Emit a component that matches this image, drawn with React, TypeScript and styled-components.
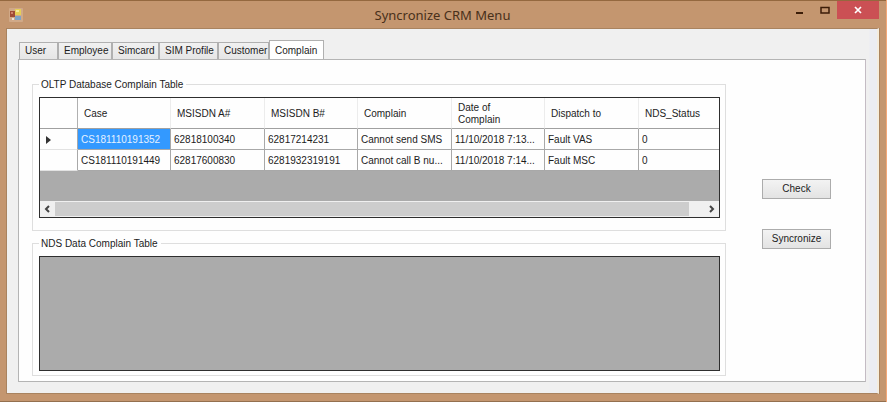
import React from "react";
import styled, { createGlobalStyle } from "styled-components";

const GlobalStyle = createGlobalStyle`
  *, *::before, *::after { box-sizing: border-box; }
  body {
    margin: 0;
    background: #f3a878;
    color: #1c1c1c;
    font: 10px/14px "Liberation Sans", Arial, sans-serif;
  }
  button { font: inherit; color: inherit; margin: 0; padding: 0; border: 0; background: none; }
`;

const Window = styled.main`
  display: flex;
  flex-direction: column;
  min-height: 100vh;
  margin-right: 1px;
  padding: 0 7px 7px 6px;
  background: #c4966f;
  border-top: 1px solid #94683f;
  border-bottom: 1px solid #94704f;
`;

const TitleBar = styled.header`
  display: grid;
  grid-template-columns: 1fr auto 1fr;
  height: 27px;
`;

const AppIcon = styled.svg`
  width: 14px;
  height: 14px;
  margin: 7px 0 0 3px;
`;

const Title = styled.h1`
  margin: 0;
  padding-top: 4px;
  font: 13px/20px "Noto Sans", "Open Sans", sans-serif;
  color: #49301a;
`;

const Controls = styled.div`
  display: flex;
  justify-content: flex-end;
  align-items: flex-start;
`;

const ControlButton = styled.button<{ $close?: boolean }>`
  display: grid;
  place-items: center;
  width: ${(p) => (p.$close ? 42 : 25)}px;
  height: 18px;
  background: ${(p) => (p.$close ? "#cb5054" : "transparent")};
  svg { display: block; }
`;

const Client = styled.div`
  flex: 1;
  display: flex;
  flex-direction: column;
  padding: 11px 11px 11px 11px;
  background: linear-gradient(to left, #ebecf3 0, #ebecf3 7px, #f0f0f0 8px);
  border: 1px solid #a9835f;
  border-right: 2px solid #f4ecdf;
  box-shadow: 1px 0 0 #a9835f;
`;

const TabList = styled.div`
  display: flex;
  align-items: flex-end;
  height: 19px;
  padding-left: 1px;
`;

const Tab = styled.button<{ $w: number; $active?: boolean }>`
  width: ${(p) => p.$w}px;
  height: ${(p) => (p.$active ? 20 : 17)}px;
  margin-bottom: ${(p) => (p.$active ? -1 : 0)}px;
  padding: 0 0 0 5px;
  text-align: left;
  white-space: nowrap;
  background: ${(p) => (p.$active ? "#ffffff" : "linear-gradient(#f1f1f1, #e6e6e6)")};
  border: 1px solid #b0b0b0;
  border-bottom: 0;
  & + & { border-left-color: ${(p) => (p.$active ? "#b0b0b0" : "#f1f1f1")}; }
`;

const Panel = styled.section`
  flex: 1;
  display: flex;
  gap: 36px;
  padding: 17px 34px 5px 13px;
  background: #fefefe;
  border: 1px solid #b4b4b4;
  border-right-color: #c4bcc4;
`;

const Groups = styled.div`
  flex: 1;
  min-width: 0;
  display: flex;
  flex-direction: column;
  gap: 5px;
`;

const Group = styled.fieldset<{ $grow?: boolean }>`
  flex: ${(p) => (p.$grow ? "1 1 auto" : "none")};
  min-width: 0;
  margin: 0;
  padding: 5px 5px ${(p) => (p.$grow ? 4 : 12)}px 6px;
  border: 1px solid #dedede;
  legend {
    height: 15px;
    padding: 0 3px 0 2px;
    line-height: 16px;
  }
`;

const Grid = styled.div`
  height: 100%;
  min-height: 115px;
  background: #ababab;
  border: 1px solid #2e2e2e;
`;

const Table = styled.table`
  width: 100%;
  table-layout: fixed;
  border-collapse: separate;
  border-spacing: 0;
  background: #fefefe;
`;

const Col = styled.col<{ $w?: number }>`
  width: ${(p) => (p.$w ? `${p.$w}px` : "auto")};
`;

const HeadCell = styled.th<{ $corner?: boolean }>`
  height: 31px;
  padding: 2px 30px 0 6px;
  font-weight: 400;
  line-height: 12px;
  text-align: left;
  border-right: 1px solid ${(p) => (p.$corner ? "#b0b0b0" : "#ececec")};
  border-bottom: 1px solid #a0a0a0;
  &:not(:nth-child(6)) { white-space: nowrap; padding-right: 0; }
  &:last-child { border-right: 0; }
`;

const Cell = styled.td<{ $selected?: boolean; $marker?: boolean }>`
  height: 21px;
  padding: 1px 0 0 3px;
  white-space: nowrap;
  color: ${(p) => (p.$selected ? "#e4f1ff" : "inherit")};
  background: ${(p) => (p.$selected ? "#3399ff" : "transparent")};
  border-right: 1px solid #a8a8a8;
  border-bottom: 1px solid ${(p) => (p.$marker ? "#e2e2e2" : "#a8a8a8")};
  &:last-child { border-right: 0; }
  svg { display: block; margin-left: 3px; }
`;

const ScrollBar = styled.div`
  display: flex;
  height: 16px;
  margin-top: 30px;
  background: #f0f0f0;
`;

const ArrowButton = styled.button`
  display: grid;
  place-items: center;
  width: 15px;
`;

const Track = styled.div`
  flex: 1;
  padding: 1px 15px 1px 0;
`;

const Thumb = styled.div`
  height: 100%;
  background: #cdcdcd;
`;

const Actions = styled.div`
  display: flex;
  flex-direction: column;
  gap: 30px;
  padding-top: 102px;
`;

const ActionButton = styled.button`
  width: 69px;
  height: 20px;
  text-align: center;
  background: linear-gradient(#f3f3f3, #e3e3e3);
  border: 1px solid #acacac;
`;

const tabs = [
  { name: "User", width: 39 },
  { name: "Employee", width: 54 },
  { name: "Simcard", width: 47 },
  { name: "SIM Profile", width: 59 },
  { name: "Customer", width: 51 },
  { name: "Complain", width: 55 },
];

const columns = [
  { name: "Case", width: 93 },
  { name: "MSISDN A#", width: 94 },
  { name: "MSISDN B#", width: 93 },
  { name: "Complain", width: 94 },
  { name: "Date of Complain", width: 93 },
  { name: "Dispatch to", width: 94 },
  { name: "NDS_Status" },
];

const rows = [
  ["CS181110191352", "62818100340", "62817214231", "Cannot send SMS", "11/10/2018 7:13...", "Fault VAS", "0"],
  ["CS181110191449", "62817600830", "6281932319191", "Cannot call B nu...", "11/10/2018 7:14...", "Fault MSC", "0"],
];

const Chevron = ({ d }: { d: string }) => (
  <svg width="7" height="8" viewBox="0 0 7 8" fill="none" stroke="#444" strokeWidth="2">
    <path d={d} />
  </svg>
);

export default function App() {
  return (
    <>
      <GlobalStyle />
      <Window>
        <TitleBar>
          <AppIcon viewBox="0 0 14 14">
            <rect x="0" y="0" width="14" height="14" rx="1" fill="#d0a988" />
            <rect x="1" y="3" width="5" height="6" fill="#a04c35" />
            <rect x="2" y="4" width="2" height="2" fill="#d18468" />
            <rect x="6" y="1" width="6" height="6" fill="#e6cf55" />
            <rect x="7" y="2" width="3" height="2" fill="#f5ea9e" />
            <rect x="6" y="8" width="6" height="4" fill="#7fa3c4" />
            <rect x="3" y="10" width="2" height="2" fill="#eee3d5" />
          </AppIcon>
          <Title>Syncronize CRM Menu</Title>
          <Controls>
            <ControlButton aria-label="Minimize">
              <svg width="9" height="9"><rect x="1" y="6" width="7" height="2" fill="#3c1d08" /></svg>
            </ControlButton>
            <ControlButton aria-label="Maximize">
              <svg width="10" height="8"><path d="M1 1.5H9V7H1Z" fill="none" stroke="#3c1d08" strokeWidth="1.5" /></svg>
            </ControlButton>
            <ControlButton $close aria-label="Close">
              <svg width="8" height="8"><path d="M1 1L7 7M7 1L1 7" stroke="#fff" strokeWidth="1.7" /></svg>
            </ControlButton>
          </Controls>
        </TitleBar>
        <Client>
          <TabList role="tablist">
            {tabs.map((t) => (
              <Tab key={t.name} role="tab" aria-selected={t.name === "Complain"} $w={t.width} $active={t.name === "Complain"}>
                {t.name}
              </Tab>
            ))}
          </TabList>
          <Panel role="tabpanel" aria-label="Complain">
            <Groups>
              <Group>
                <legend>OLTP Database Complain Table</legend>
                <Grid>
                  <Table>
                    <colgroup>
                      <Col $w={38} />
                      {columns.map((c) => <Col key={c.name} $w={c.width} />)}
                    </colgroup>
                    <thead>
                      <tr>
                        <HeadCell $corner />
                        {columns.map((c) => <HeadCell key={c.name} scope="col">{c.name}</HeadCell>)}
                      </tr>
                    </thead>
                    <tbody>
                      {rows.map((row, r) => (
                        <tr key={row[0]}>
                          <Cell $marker>
                            {r === 0 && <svg width="5" height="8"><path d="M0 0L5 4L0 8Z" fill="#333" /></svg>}
                          </Cell>
                          {row.map((value, c) => (
                            <Cell key={columns[c].name} $selected={r === 0 && c === 0}>{value}</Cell>
                          ))}
                        </tr>
                      ))}
                    </tbody>
                  </Table>
                  <ScrollBar>
                    <ArrowButton aria-label="Scroll left"><Chevron d="M5 1L2 4L5 7" /></ArrowButton>
                    <Track><Thumb /></Track>
                    <ArrowButton aria-label="Scroll right"><Chevron d="M2 1L5 4L2 7" /></ArrowButton>
                  </ScrollBar>
                </Grid>
              </Group>
              <Group $grow>
                <legend>NDS Data Complain Table</legend>
                <Grid />
              </Group>
            </Groups>
            <Actions>
              <ActionButton>Check</ActionButton>
              <ActionButton>Syncronize</ActionButton>
            </Actions>
          </Panel>
        </Client>
      </Window>
    </>
  );
}
